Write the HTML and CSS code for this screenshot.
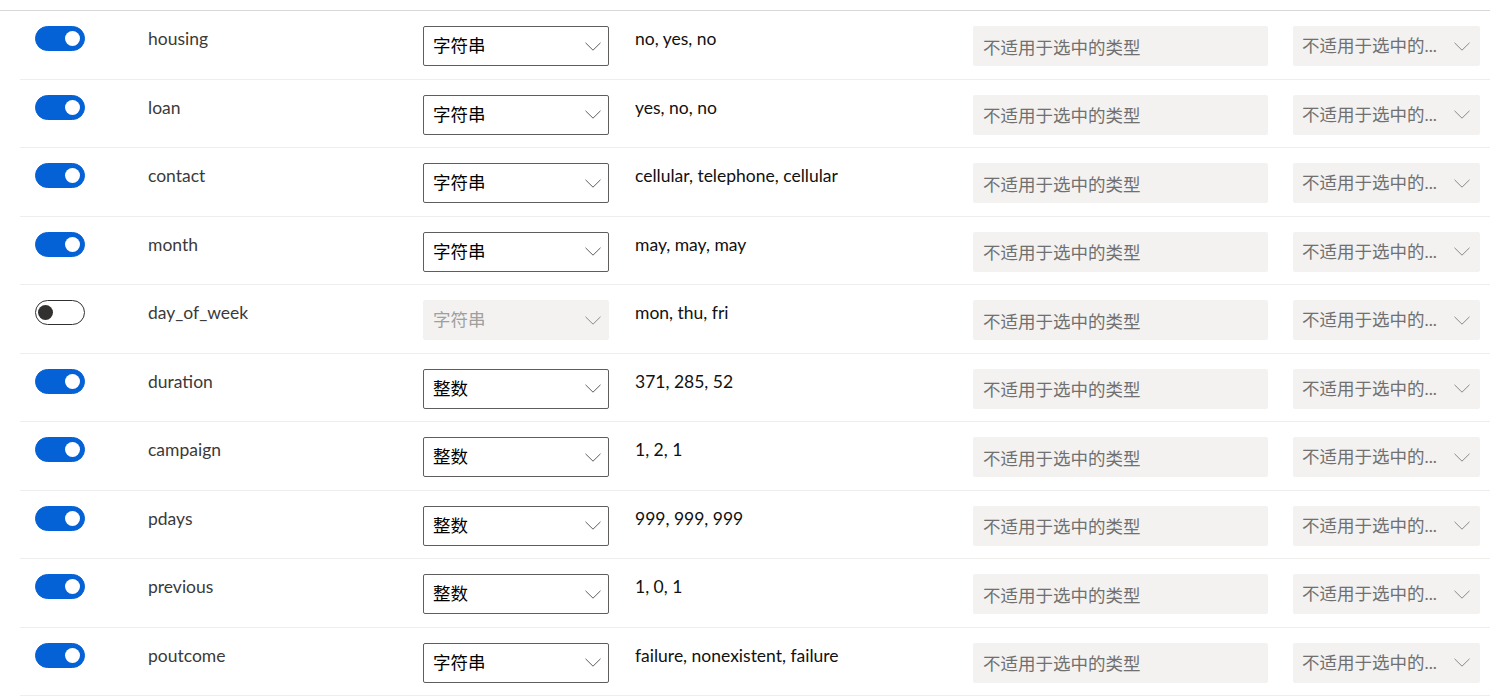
FILE: index.html
```html
<!DOCTYPE html>
<html lang="zh-CN">
<head>
<meta charset="utf-8">
<title>Schema</title>
<link rel="stylesheet" href="styles.css">
</head>
<body>
<div class="page">
  <div class="header-line"></div>
  <div class="list">

    <div class="row">
      <div class="cell"><span class="toggle on"><span class="knob"></span></span></div>
      <div class="cell text name">housing</div>
      <div class="cell"><div class="dropdown"><span class="dd-text">字符串</span><svg class="chev" viewBox="0 0 16 9" width="16" height="9"><path d="M0.5 0.8 L8 8.2 L15.5 0.8"/></svg></div></div>
      <div class="cell text sample">no, yes, no</div>
      <div class="cell"><div class="na-box">不适用于选中的类型</div></div>
      <div class="cell"><div class="dropdown disabled wide"><span class="dd-text">不适用于选中的...</span><svg class="chev" viewBox="0 0 16 9" width="16" height="9"><path d="M0.5 0.8 L8 8.2 L15.5 0.8"/></svg></div></div>
    </div>

    <div class="row">
      <div class="cell"><span class="toggle on"><span class="knob"></span></span></div>
      <div class="cell text name">loan</div>
      <div class="cell"><div class="dropdown"><span class="dd-text">字符串</span><svg class="chev" viewBox="0 0 16 9" width="16" height="9"><path d="M0.5 0.8 L8 8.2 L15.5 0.8"/></svg></div></div>
      <div class="cell text sample">yes, no, no</div>
      <div class="cell"><div class="na-box">不适用于选中的类型</div></div>
      <div class="cell"><div class="dropdown disabled wide"><span class="dd-text">不适用于选中的...</span><svg class="chev" viewBox="0 0 16 9" width="16" height="9"><path d="M0.5 0.8 L8 8.2 L15.5 0.8"/></svg></div></div>
    </div>

    <div class="row">
      <div class="cell"><span class="toggle on"><span class="knob"></span></span></div>
      <div class="cell text name">contact</div>
      <div class="cell"><div class="dropdown"><span class="dd-text">字符串</span><svg class="chev" viewBox="0 0 16 9" width="16" height="9"><path d="M0.5 0.8 L8 8.2 L15.5 0.8"/></svg></div></div>
      <div class="cell text sample">cellular, telephone, cellular</div>
      <div class="cell"><div class="na-box">不适用于选中的类型</div></div>
      <div class="cell"><div class="dropdown disabled wide"><span class="dd-text">不适用于选中的...</span><svg class="chev" viewBox="0 0 16 9" width="16" height="9"><path d="M0.5 0.8 L8 8.2 L15.5 0.8"/></svg></div></div>
    </div>

    <div class="row">
      <div class="cell"><span class="toggle on"><span class="knob"></span></span></div>
      <div class="cell text name">month</div>
      <div class="cell"><div class="dropdown"><span class="dd-text">字符串</span><svg class="chev" viewBox="0 0 16 9" width="16" height="9"><path d="M0.5 0.8 L8 8.2 L15.5 0.8"/></svg></div></div>
      <div class="cell text sample">may, may, may</div>
      <div class="cell"><div class="na-box">不适用于选中的类型</div></div>
      <div class="cell"><div class="dropdown disabled wide"><span class="dd-text">不适用于选中的...</span><svg class="chev" viewBox="0 0 16 9" width="16" height="9"><path d="M0.5 0.8 L8 8.2 L15.5 0.8"/></svg></div></div>
    </div>

    <div class="row">
      <div class="cell"><span class="toggle off"><span class="knob"></span></span></div>
      <div class="cell text name">day_of_week</div>
      <div class="cell"><div class="dropdown disabled"><span class="dd-text">字符串</span><svg class="chev" viewBox="0 0 16 9" width="16" height="9"><path d="M0.5 0.8 L8 8.2 L15.5 0.8"/></svg></div></div>
      <div class="cell text sample">mon, thu, fri</div>
      <div class="cell"><div class="na-box">不适用于选中的类型</div></div>
      <div class="cell"><div class="dropdown disabled wide"><span class="dd-text">不适用于选中的...</span><svg class="chev" viewBox="0 0 16 9" width="16" height="9"><path d="M0.5 0.8 L8 8.2 L15.5 0.8"/></svg></div></div>
    </div>

    <div class="row">
      <div class="cell"><span class="toggle on"><span class="knob"></span></span></div>
      <div class="cell text name">duration</div>
      <div class="cell"><div class="dropdown"><span class="dd-text">整数</span><svg class="chev" viewBox="0 0 16 9" width="16" height="9"><path d="M0.5 0.8 L8 8.2 L15.5 0.8"/></svg></div></div>
      <div class="cell text sample">371, 285, 52</div>
      <div class="cell"><div class="na-box">不适用于选中的类型</div></div>
      <div class="cell"><div class="dropdown disabled wide"><span class="dd-text">不适用于选中的...</span><svg class="chev" viewBox="0 0 16 9" width="16" height="9"><path d="M0.5 0.8 L8 8.2 L15.5 0.8"/></svg></div></div>
    </div>

    <div class="row">
      <div class="cell"><span class="toggle on"><span class="knob"></span></span></div>
      <div class="cell text name">campaign</div>
      <div class="cell"><div class="dropdown"><span class="dd-text">整数</span><svg class="chev" viewBox="0 0 16 9" width="16" height="9"><path d="M0.5 0.8 L8 8.2 L15.5 0.8"/></svg></div></div>
      <div class="cell text sample">1, 2, 1</div>
      <div class="cell"><div class="na-box">不适用于选中的类型</div></div>
      <div class="cell"><div class="dropdown disabled wide"><span class="dd-text">不适用于选中的...</span><svg class="chev" viewBox="0 0 16 9" width="16" height="9"><path d="M0.5 0.8 L8 8.2 L15.5 0.8"/></svg></div></div>
    </div>

    <div class="row">
      <div class="cell"><span class="toggle on"><span class="knob"></span></span></div>
      <div class="cell text name">pdays</div>
      <div class="cell"><div class="dropdown"><span class="dd-text">整数</span><svg class="chev" viewBox="0 0 16 9" width="16" height="9"><path d="M0.5 0.8 L8 8.2 L15.5 0.8"/></svg></div></div>
      <div class="cell text sample">999, 999, 999</div>
      <div class="cell"><div class="na-box">不适用于选中的类型</div></div>
      <div class="cell"><div class="dropdown disabled wide"><span class="dd-text">不适用于选中的...</span><svg class="chev" viewBox="0 0 16 9" width="16" height="9"><path d="M0.5 0.8 L8 8.2 L15.5 0.8"/></svg></div></div>
    </div>

    <div class="row">
      <div class="cell"><span class="toggle on"><span class="knob"></span></span></div>
      <div class="cell text name">previous</div>
      <div class="cell"><div class="dropdown"><span class="dd-text">整数</span><svg class="chev" viewBox="0 0 16 9" width="16" height="9"><path d="M0.5 0.8 L8 8.2 L15.5 0.8"/></svg></div></div>
      <div class="cell text sample">1, 0, 1</div>
      <div class="cell"><div class="na-box">不适用于选中的类型</div></div>
      <div class="cell"><div class="dropdown disabled wide"><span class="dd-text">不适用于选中的...</span><svg class="chev" viewBox="0 0 16 9" width="16" height="9"><path d="M0.5 0.8 L8 8.2 L15.5 0.8"/></svg></div></div>
    </div>

    <div class="row">
      <div class="cell"><span class="toggle on"><span class="knob"></span></span></div>
      <div class="cell text name">poutcome</div>
      <div class="cell"><div class="dropdown"><span class="dd-text">字符串</span><svg class="chev" viewBox="0 0 16 9" width="16" height="9"><path d="M0.5 0.8 L8 8.2 L15.5 0.8"/></svg></div></div>
      <div class="cell text sample">failure, nonexistent, failure</div>
      <div class="cell"><div class="na-box">不适用于选中的类型</div></div>
      <div class="cell"><div class="dropdown disabled wide"><span class="dd-text">不适用于选中的...</span><svg class="chev" viewBox="0 0 16 9" width="16" height="9"><path d="M0.5 0.8 L8 8.2 L15.5 0.8"/></svg></div></div>
    </div>

  </div>
</div>
</body>
</html>
```
FILE: styles.css
```css
html, body {
  margin: 0;
  padding: 0;
  background: #ffffff;
}

body {
  font-family: "Lato", "Noto Sans CJK SC", sans-serif;
  font-size: 17.5px;
  color: #201f1e;
}

.page {
  width: 1490px;
}

.header-line {
  height: 10px;
  border-bottom: 1px solid #d8d8d8;
}

.list {
  margin-left: 20px;
}

.row {
  display: grid;
  grid-template-columns: 113px 275px 212px 338px 320px 187px;
  align-items: start;
  padding-left: 15px;
  height: 67.5px;
  border-bottom: 1px solid #efeeed;
}

.cell {
  padding-top: 15px;
}

.cell.text {
  padding-top: 16px;
  line-height: 24px;
  white-space: nowrap;
}

.name {
  color: #3b3a39;
}

.sample {
  color: #111111;
}

/* toggle */
.toggle {
  box-sizing: border-box;
  display: flex;
  align-items: center;
  width: 50px;
  height: 25px;
  border-radius: 13px;
  border: 1px solid #0462d6;
  background: #0462d6;
}

.toggle.on {
  justify-content: flex-end;
  padding: 0 4px;
}

.toggle.off {
  justify-content: flex-start;
  padding: 0 2px;
  background: #ffffff;
  border-color: #323130;
}

.knob {
  width: 15px;
  height: 15px;
  border-radius: 50%;
  background: #ffffff;
}

.toggle.off .knob {
  background: #323130;
}

/* dropdown */
.dropdown {
  box-sizing: border-box;
  display: flex;
  align-items: center;
  justify-content: space-between;
  width: 186px;
  height: 40px;
  padding: 0 7px 0 9px;
  border: 1px solid #605e5c;
  border-radius: 2px;
  background: #ffffff;
  color: #000000;
}

.dd-text {
  line-height: 24px;
  white-space: nowrap;
}

.chev {
  display: block;
  flex: none;
}

.chev path {
  fill: none;
  stroke: #605e5c;
  stroke-width: 1;
}

.dropdown.disabled {
  border-color: #f3f2f1;
  background: #f3f2f1;
  color: #a19f9d;
}

.dropdown.disabled .chev path {
  stroke: #8a8886;
}

.dropdown.wide {
  width: 187px;
  padding: 0 9px 0 8px;
  color: #707070;
}

/* not-applicable box */
.na-box {
  box-sizing: border-box;
  display: flex;
  align-items: center;
  width: 295px;
  height: 40px;
  padding-left: 10px;
  border-radius: 2px;
  background: #f3f2f1;
  color: #707070;
  white-space: nowrap;
}
```
